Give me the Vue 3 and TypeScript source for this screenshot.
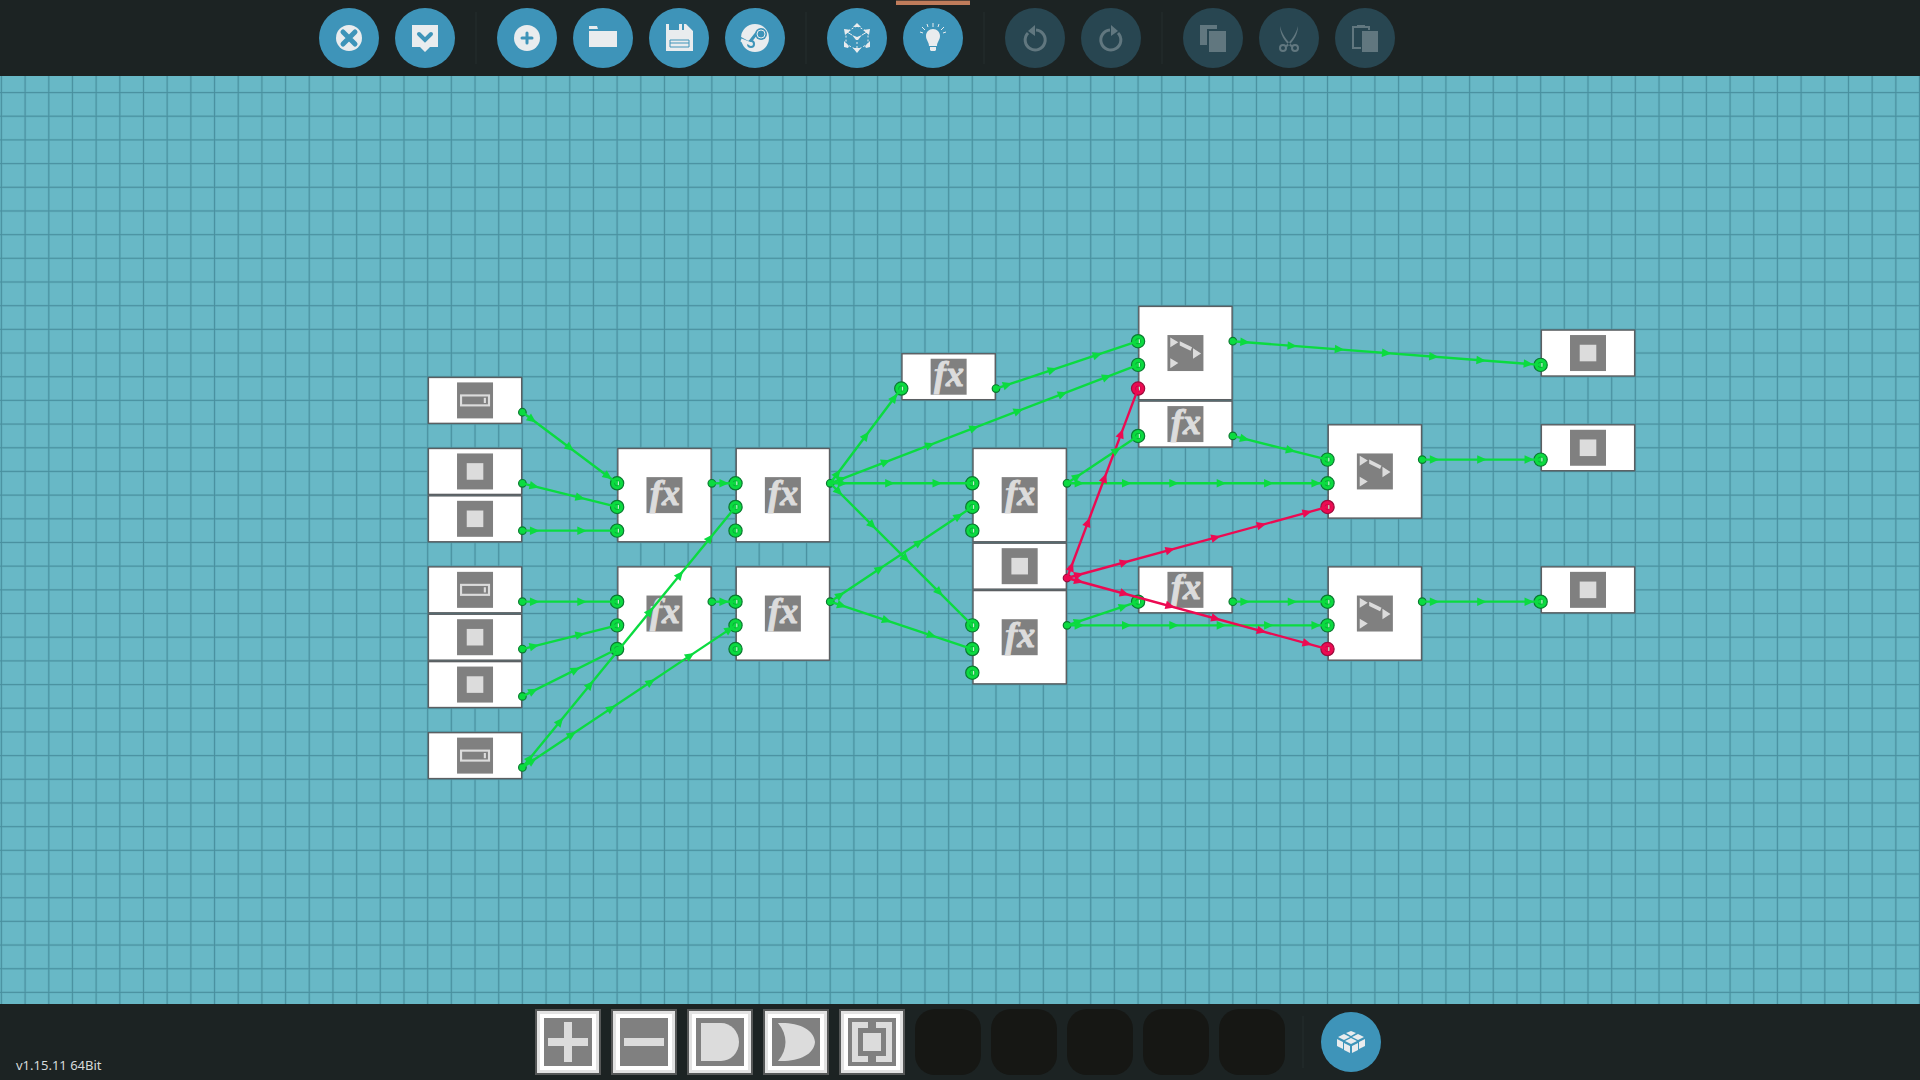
<script setup lang="ts">
type Signal = 'on' | 'off'
type Glyph = 'number' | 'square' | 'fx' | 'switch'
type Point = [number, number]

interface LogicNode {
  x: number
  y: number
  rows: number
  glyph: Glyph
  inputs: Signal[]
  output?: Signal
}

interface Link {
  from: Point
  to: Point
  signal: Signal
}

/* Drawing units per grid cell; node and link positions are given in cells. */
const CELL = 100
const COLUMNS = 82
const ROWS = 40

const on3: Signal[] = ['on', 'on', 'on']
const gate3: Signal[] = ['on', 'on', 'off']

const nodes: LogicNode[] = [
  { x: 18, y: 12, rows: 2, glyph: 'number', inputs: [], output: 'on' },
  { x: 18, y: 15, rows: 2, glyph: 'square', inputs: [], output: 'on' },
  { x: 18, y: 17, rows: 2, glyph: 'square', inputs: [], output: 'on' },
  { x: 18, y: 20, rows: 2, glyph: 'number', inputs: [], output: 'on' },
  { x: 18, y: 22, rows: 2, glyph: 'square', inputs: [], output: 'on' },
  { x: 18, y: 24, rows: 2, glyph: 'square', inputs: [], output: 'on' },
  { x: 18, y: 27, rows: 2, glyph: 'number', inputs: [], output: 'on' },
  { x: 26, y: 15, rows: 4, glyph: 'fx', inputs: on3, output: 'on' },
  { x: 31, y: 15, rows: 4, glyph: 'fx', inputs: on3, output: 'on' },
  { x: 26, y: 20, rows: 4, glyph: 'fx', inputs: on3, output: 'on' },
  { x: 31, y: 20, rows: 4, glyph: 'fx', inputs: on3, output: 'on' },
  { x: 38, y: 11, rows: 2, glyph: 'fx', inputs: ['on'], output: 'on' },
  { x: 41, y: 15, rows: 4, glyph: 'fx', inputs: on3, output: 'on' },
  { x: 41, y: 19, rows: 2, glyph: 'square', inputs: [], output: 'off' },
  { x: 41, y: 21, rows: 4, glyph: 'fx', inputs: on3, output: 'on' },
  { x: 48, y: 9, rows: 4, glyph: 'switch', inputs: gate3, output: 'on' },
  { x: 48, y: 13, rows: 2, glyph: 'fx', inputs: ['on'], output: 'on' },
  { x: 48, y: 20, rows: 2, glyph: 'fx', inputs: ['on'], output: 'on' },
  { x: 56, y: 14, rows: 4, glyph: 'switch', inputs: gate3, output: 'on' },
  { x: 56, y: 20, rows: 4, glyph: 'switch', inputs: gate3, output: 'on' },
  { x: 65, y: 10, rows: 2, glyph: 'square', inputs: ['on'] },
  { x: 65, y: 14, rows: 2, glyph: 'square', inputs: ['on'] },
  { x: 65, y: 20, rows: 2, glyph: 'square', inputs: ['on'] },
]

const link = (x1: number, y1: number, x2: number, y2: number, signal: Signal = 'on'): Link => ({
  from: [x1, y1],
  to: [x2, y2],
  signal,
})

const links: Link[] = [
  link(22, 13.5, 26, 16.5),
  link(22, 16.5, 26, 17.5),
  link(22, 18.5, 26, 18.5),
  link(22, 21.5, 26, 21.5),
  link(22, 23.5, 26, 22.5),
  link(22, 25.5, 26, 23.5),
  link(22, 28.5, 31, 17.5),
  link(22, 28.5, 31, 22.5),
  link(30, 16.5, 31, 16.5),
  link(30, 21.5, 31, 21.5),
  link(35, 16.5, 38, 12.5),
  link(35, 16.5, 48, 11.5),
  link(35, 16.5, 41, 16.5),
  link(35, 16.5, 41, 22.5),
  link(35, 21.5, 41, 17.5),
  link(35, 21.5, 41, 23.5),
  link(42, 12.5, 48, 10.5),
  link(45, 16.5, 48, 14.5),
  link(45, 16.5, 56, 16.5),
  link(45, 22.5, 48, 21.5),
  link(45, 22.5, 56, 22.5),
  link(52, 10.5, 65, 11.5),
  link(52, 14.5, 56, 15.5),
  link(52, 21.5, 56, 21.5),
  link(60, 15.5, 65, 15.5),
  link(60, 21.5, 65, 21.5),
  link(45, 20.5, 48, 12.5, 'off'),
  link(45, 20.5, 56, 17.5, 'off'),
  link(45, 20.5, 56, 23.5, 'off'),
]

/* Arrowheads sit half a cell after the source and then every two cells. */
const arrows = links.flatMap((l) => {
  const dx = l.to[0] - l.from[0]
  const dy = l.to[1] - l.from[1]
  const length = Math.hypot(dx, dy)
  const angle = (Math.atan2(dy, dx) * 180) / Math.PI
  const list: { transform: string; signal: Signal }[] = []
  for (let d = 0.5; d < length - 0.3; d += 2) {
    const x = (l.from[0] + (dx * d) / length) * CELL
    const y = (l.from[1] + (dy * d) / length) * CELL
    list.push({ transform: `translate(${x} ${y}) rotate(${angle})`, signal: l.signal })
  }
  return list
})

const gridPath = [
  ...Array.from({ length: COLUMNS }, (_, i) => `M${i * CELL} -${CELL}V${ROWS * CELL}`),
  ...Array.from({ length: ROWS }, (_, i) => `M-${CELL} ${i * CELL}H${COLUMNS * CELL}`),
].join('')

interface Tool {
  icon: string
  label: string
  disabled?: boolean
  active?: boolean
}

const toolGroups: Tool[][] = [
  [
    { icon: 'close', label: 'Close' },
    { icon: 'confirm', label: 'Confirm' },
  ],
  [
    { icon: 'new', label: 'New' },
    { icon: 'open', label: 'Open' },
    { icon: 'save', label: 'Save' },
    { icon: 'steam', label: 'Workshop' },
  ],
  [
    { icon: 'cube', label: 'Layout' },
    { icon: 'bulb', label: 'Simulate', active: true },
  ],
  [
    { icon: 'undo', label: 'Undo', disabled: true },
    { icon: 'redo', label: 'Redo', disabled: true },
  ],
  [
    { icon: 'copy', label: 'Copy', disabled: true },
    { icon: 'cut', label: 'Cut', disabled: true },
    { icon: 'paste', label: 'Paste', disabled: true },
  ],
]

const slots = ['Add', 'Subtract', 'And', 'Or', 'Property', '', '', '', '', '']
</script>

<template>
  <div class="editor">
    <header class="bar top">
      <template v-for="(group, g) in toolGroups" :key="g">
        <span v-if="g > 0" class="divider"></span>
        <div class="group">
          <button
            v-for="tool in group"
            :key="tool.icon"
            type="button"
            class="round"
            :class="{ active: tool.active }"
            :disabled="tool.disabled"
            :aria-label="tool.label"
          >
            <svg viewBox="0 0 32 32" class="icon">
              <g v-if="tool.icon === 'close'">
                <circle cx="16" cy="16" r="13" />
                <path d="M10 10L22 22M22 10L10 22" class="cut" stroke-width="5" />
              </g>
              <g v-else-if="tool.icon === 'confirm'">
                <path d="M3 3H29V25H21L16 30L11 25H3Z" />
                <path d="M10 12L16 18L22 12" class="cut" stroke-width="4" />
              </g>
              <g v-else-if="tool.icon === 'new'">
                <circle cx="16" cy="16" r="13" />
                <path d="M16 11V21M11 16H21" class="cut" stroke-width="3" />
              </g>
              <g v-else-if="tool.icon === 'open'">
                <path d="M2 4H10L11 7H2ZM2 9H30V25H2Z" />
              </g>
              <g v-else-if="tool.icon === 'save'">
                <path d="M3 2H6V8H16V2H19V8H21V2H23L30 9V29H3Z" />
                <path d="M7 18H26V25H7ZM7 21H26" class="cut thin" stroke-width="1" />
              </g>
              <g v-else-if="tool.icon === 'steam'">
                <circle cx="16" cy="16" r="14" />
                <path d="M1 16L10 21L17 12" class="cut" stroke-width="3" />
                <circle cx="22" cy="12" r="6" class="hole" />
                <circle cx="22" cy="12" r="4" fill="none" stroke="currentColor" />
                <circle cx="12" cy="22" r="4" class="hole" />
                <path d="M2 18L12 22" fill="none" stroke="currentColor" stroke-width="3" />
                <circle cx="12" cy="22" r="2" />
              </g>
              <g v-else-if="tool.icon === 'cube'">
                <path
                  d="M16 4L27 10V22L16 28L5 22V10Z"
                  fill="none"
                  stroke="currentColor"
                  stroke-width="1"
                  stroke-dasharray="2 2"
                />
                <path d="M16 16V26" stroke="currentColor" stroke-width="1" stroke-dasharray="2 2" />
                <path
                  d="M16 1L20 5H12ZM16 31L12 26H20ZM3 7L10 8L4 13ZM29 7L22 8L28 13ZM3 25V19L8 24L7 26ZM29 25V19L24 24L25 26ZM11 13L16 15L21 13L17 18H15Z"
                />
                <path d="M6 10L11 13M26 10L21 13" stroke="currentColor" stroke-width="1" />
              </g>
              <g v-else-if="tool.icon === 'bulb'">
                <path d="M16 7C20 7 23 10 23 14C23 18 20 20 20 24H12C12 20 9 18 9 14C9 10 12 7 16 7ZM13 25H19V28L18 29H14L13 28Z" />
                <path
                  d="M16 1V5M10 2L11 5M22 2L21 5M5 5L8 8M27 5L24 8M3 10L6 11M29 10L26 11"
                  stroke="currentColor"
                  stroke-width="1"
                />
              </g>
              <g v-else-if="tool.icon === 'undo' || tool.icon === 'redo'">
                <g :transform="tool.icon === 'redo' ? 'translate(32 0) scale(-1 1)' : undefined">
                  <path
                    d="M9 11A10 10 0 1 0 17 8"
                    fill="none"
                    stroke="currentColor"
                    stroke-width="3"
                  />
                  <path d="M9 9L16 3V14Z" />
                </g>
              </g>
              <g v-else-if="tool.icon === 'copy'">
                <path d="M3 3H20V7H10V23H3ZM12 9H29V30H12Z" />
              </g>
              <g v-else-if="tool.icon === 'cut'">
                <path d="M7 4C9 12 13 18 20 24L18 25C11 19 7 12 7 4ZM25 4C23 12 19 18 12 24L14 25C21 19 25 12 25 4Z" />
                <g fill="none" stroke="currentColor" stroke-width="2">
                  <circle cx="10" cy="26" r="3" />
                  <circle cx="22" cy="26" r="3" />
                </g>
              </g>
              <g v-else>
                <path
                  d="M12 26H4V5H8M16 5H20V8"
                  fill="none"
                  stroke="currentColor"
                  stroke-width="2"
                />
                <path d="M8 3H16V6H8ZM13 9H29V30H13Z" />
              </g>
            </svg>
          </button>
        </div>
      </template>
    </header>

    <main class="board">
      <svg viewBox="0 0 8108 3919" preserveAspectRatio="xMidYMid slice" class="canvas">
        <g transform="translate(6 70)">
          <path :d="gridPath" class="grid-soft" />
          <path :d="gridPath" class="grid-line" />

          <g
            v-for="(node, n) in nodes"
            :key="n"
            :transform="`translate(${node.x * CELL} ${node.y * CELL})`"
          >
            <rect x="3" y="3" width="394" :height="node.rows * CELL - 6" class="node" />
            <g :transform="`translate(200 ${node.rows * 50})`">
              <rect x="-76" y="-76" width="152" height="152" class="tile" />
              <rect v-if="node.glyph === 'square'" x="-35" y="-35" width="70" height="70" class="pale" />
              <g v-else-if="node.glyph === 'number'">
                <rect x="-59" y="-21" width="118" height="42" class="pale-line" />
                <rect x="37" y="-11" width="9" height="22" class="pale" />
              </g>
              <g v-else-if="node.glyph === 'switch'" class="pale">
                <path d="M-64 -66L-30 -46L-64 -24ZM-64 22L-30 42L-64 64ZM32 -20L66 2L32 24Z" />
                <path d="M-24 -50L28 -24L22 -10L-24 -32Z" />
              </g>
              <text v-else x="2" y="40" text-anchor="middle" class="fx">fx</text>
            </g>
            <g
              v-for="(signal, i) in node.inputs"
              :key="i"
              :transform="`translate(0 ${i * CELL + 150})`"
              :class="signal"
            >
              <circle r="28" class="port" />
              <circle r="11" class="port-ring" />
              <rect x="3" y="-8" width="5" height="16" class="port-shine" />
            </g>
            <circle
              v-if="node.output"
              cx="400"
              cy="150"
              r="16"
              class="port"
              :class="node.output"
            />
          </g>

          <g v-for="(l, i) in links" :key="`l${i}`" :class="l.signal">
            <line
              :x1="l.from[0] * CELL"
              :y1="l.from[1] * CELL"
              :x2="l.to[0] * CELL"
              :y2="l.to[1] * CELL"
              class="wire"
            />
          </g>
          <path
            v-for="(a, i) in arrows"
            :key="`a${i}`"
            d="M-18 -18L22 0L-18 18Z"
            :transform="a.transform"
            class="head"
            :class="a.signal"
          />
        </g>
      </svg>
    </main>

    <footer class="bar bottom">
      <span class="version">v1.15.11 64Bit</span>
      <div class="dock">
        <div class="slots">
          <button
            v-for="(slot, s) in slots"
            :key="s"
            type="button"
            class="slot"
            :class="{ empty: !slot }"
            :aria-label="slot || 'Empty slot'"
          >
            <svg v-if="slot" viewBox="0 0 48 48" class="slot-icon">
              <path v-if="slot === 'Add'" d="M20 4H28V20H44V28H28V44H20V28H4V20H20Z" />
              <path v-else-if="slot === 'Subtract'" d="M4 20H44V28H4Z" />
              <path v-else-if="slot === 'And'" d="M5 5H25A18 19 0 0 1 25 43H5Z" />
              <path v-else-if="slot === 'Or'" d="M6 5C26 4 42 11 43 24C42 37 26 44 6 43C16 31 16 17 6 5Z" />
              <g v-else>
                <path d="M4 4H20V10H10V38H20V44H4ZM44 4H28V10H38V38H28V44H44Z" />
                <path d="M15 15H33V33H15Z" />
              </g>
            </svg>
          </button>
        </div>
        <span class="divider"></span>
        <button type="button" class="round" aria-label="Components">
          <svg viewBox="0 0 32 32" class="icon">
            <path
              d="M16 5L21 7L16 10L11 7ZM9 8L15 11L9 14L3 11ZM23 8L29 11L23 14L17 11ZM16 12L22 15L16 18L10 15ZM2 13L8 16V23L2 20ZM30 13L24 16V23L30 20ZM9 17L15 20V27L9 24ZM23 17L17 20V27L23 24Z"
            />
          </svg>
        </button>
      </div>
    </footer>
  </div>
</template>

<style>
body {
  margin: 0;
  background: #1c2323;
}
</style>

<style scoped>
.editor {
  display: flex;
  flex-direction: column;
  height: 100vh;
  font-family: "Noto Sans", "Open Sans", sans-serif;
}

.bar {
  flex: none;
  box-sizing: border-box;
  height: 76px;
  background: #1c2323;
}

.top {
  display: flex;
  align-items: center;
  justify-content: center;
  gap: 20px;
  padding-right: 206px;
}

.group {
  display: flex;
  gap: 16px;
}

.divider {
  width: 2px;
  height: 52px;
  background: #202828;
}

.round {
  position: relative;
  display: flex;
  align-items: center;
  justify-content: center;
  width: 60px;
  height: 60px;
  padding: 0;
  border: 0;
  border-radius: 50%;
  background: #3e94b9;
  color: #e9ecee;
}

.round:disabled {
  background: #284651;
  color: #61777f;
}

.round.active::before {
  content: "";
  position: absolute;
  top: -8px;
  left: -7px;
  width: 74px;
  height: 4px;
  border-top: 1px solid #5a4438;
  box-sizing: content-box;
  background: #bf7c5b;
}

.icon {
  width: 32px;
  height: 32px;
  fill: currentColor;
}

.cut {
  fill: none;
  stroke: #3e94b9;
  stroke-linecap: round;
}

.cut.thin {
  stroke-linecap: butt;
}

.hole {
  fill: #3e94b9;
}

.board {
  flex: 1;
  min-height: 0;
  background: #68b8c6;
}

.canvas {
  display: block;
  width: 100%;
  height: 100%;
}

.grid-soft {
  stroke: #61afbd;
  stroke-width: 10;
}

.grid-line {
  stroke: #498f9e;
  stroke-width: 4;
}

.node {
  fill: #fff;
  stroke: #5b5f62;
  stroke-width: 6;
}

.tile {
  fill: #808080;
}

.pale {
  fill: #dcdcdc;
}

.pale-line {
  fill: none;
  stroke: #dcdcdc;
  stroke-width: 9;
}

.fx {
  fill: #dcdcdc;
  stroke: #dcdcdc;
  stroke-width: 4;
  font: italic bold 152px "Liberation Serif", serif;
}

.on {
  --signal: #0bdb40;
  --edge: #0a7a30;
}

.off {
  --signal: #ec0a52;
  --edge: #9c0c3c;
}

.port {
  fill: var(--signal);
  stroke: var(--edge);
  stroke-width: 5;
}

.port-ring {
  fill: none;
  stroke: var(--edge);
  stroke-width: 2;
}

.port-shine {
  fill: #c4f2ce;
}

.wire {
  stroke: var(--signal);
  stroke-width: 10;
}

.head {
  fill: var(--signal);
}

.bottom {
  display: grid;
  grid-template-columns: 1fr auto 1fr;
  padding: 0 20px 0 16px;
}

.version {
  align-self: end;
  padding-bottom: 6px;
  font-size: 13px;
  line-height: 18px;
  color: #d6dada;
}

.dock {
  display: flex;
  align-items: center;
  gap: 17px;
}

.slots {
  display: flex;
  gap: 10px;
}

.slot {
  display: flex;
  align-items: center;
  justify-content: center;
  box-sizing: border-box;
  width: 66px;
  height: 66px;
  padding: 0;
  border: 2px solid #565858;
  background: #fff;
  box-shadow: inset 0 0 0 3px #e2e2e2;
}

.slot.empty {
  border: 0;
  border-radius: 20px;
  background: #161714;
  box-shadow: none;
}

.slot-icon {
  width: 48px;
  height: 48px;
  background: #808080;
  fill: #dcdcdc;
}
</style>
